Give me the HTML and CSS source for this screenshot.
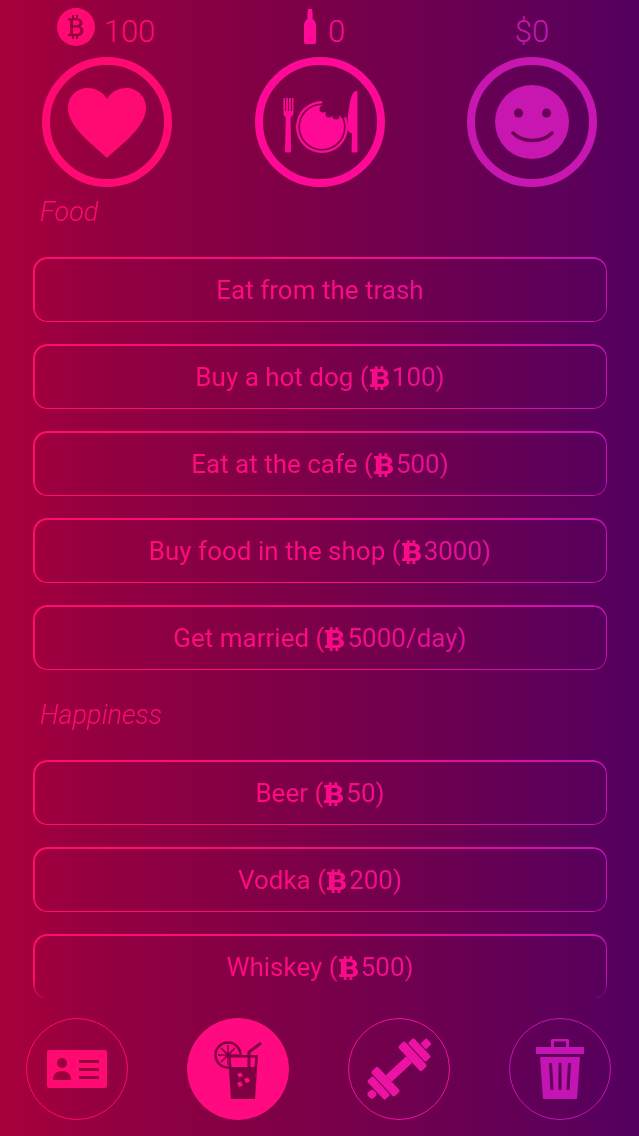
FILE: index.html
```html
<html lang="en">

<head>
    <meta charset="UTF-8">
    <meta name="viewport" content="width=device-width, initial-scale=1.0">
    <title>Life Simulator</title>
    <link rel="stylesheet" href="styles.css">
</head>

<body>
    <svg class="sprites">
        <symbol id="btc" viewBox="0 0 20 25">
            <path fill-rule="evenodd" d="M5 0h3v3h3V0h3v3.200c3.300.6 5 2.500 5 5 0 1.800-1 3.200-2.500 3.900 2 .7 3.500 2.300 3.500 4.700 0 3.100-2.300 5-6 5.200V25h-3v-3h-3v3H5v-3H0v-3h2V6H0V3h5zm3 6.200v4.600h3.500c1.800 0 3-.9 3-2.300S13.300 6.200 11.500 6.200zm0 7.700v5h4c2 0 3.300-1 3-2.500-.1-1.600-1.300-2.500-3-2.500z" />
        </symbol>
    </svg>

    <div class="game">
        <div class="stats">
            <div class="stat stat--red">
                <div class="stat__label">
                    <svg class="stat__coin" viewBox="0 0 38 38">
                        <mask id="coin-b">
                            <rect width="38" height="38" fill="#fff" />
                            <path fill="#000" fill-rule="evenodd" d="M15 7h2v3h2V7h2v3.200c3 .6 4.500 2.300 4.500 4.800 0 1.700-.8 3-2.200 3.600 2 .6 3.200 2.200 3.200 4.400 0 3-2 4.800-5.500 5.200V31h-2v-2.700h-2V31h-2v-2.700h-4v-2.300h2V12.500h-2v-2.300h4zm1 5.300v5h3.500c1.800 0 3-.9 3-2.500s-1.200-2.500-3-2.500zm0 7.200v6.200h4c2 0 3.300-1.200 3.300-3.100s-1.300-3.100-3.300-3.100z" />
                        </mask>
                        <circle cx="19" cy="19" r="19" fill="currentColor" mask="url(#coin-b)" />
                    </svg>
                    <span class="stat__value">100</span>
                </div>
                <div class="stat__ring">
                    <svg class="icon-heart" viewBox="0 0 78 70">
                        <path fill="currentColor" d="M39 70C27 58 0 40 0 20 0 8 9 0 20 0c8 0 15 4 19 11C43 4 50 0 58 0c11 0 20 8 20 20 0 20-27 38-39 50z" />
                    </svg>
                </div>
            </div>

            <div class="stat stat--pink">
                <div class="stat__label">
                    <svg class="stat__bottle" viewBox="0 0 12 35">
                        <path fill="currentColor" d="M4 0h4v2l.6.500V9c0 2 3.400 3 3.400 7v17c0 1.200-.8 2-2 2H2c-1.200 0-2-.8-2-2V16c0-4 3.400-5 3.400-7V2.500L4 2z" />
                    </svg>
                    <span class="stat__value">0</span>
                </div>
                <div class="stat__ring">
                    <svg class="icon-plate" viewBox="0 0 80 66">
                        <mask id="plate-bite">
                            <rect width="80" height="66" fill="#fff" />
                            <circle cx="42" cy="38" r="22.800" fill="none" stroke="#000" stroke-width="1.600" />
                            <circle cx="55" cy="14" r="13" fill="#000" />
                            <circle cx="43" cy="20" r="3.500" fill="#000" />
                            <circle cx="49" cy="25" r="3.500" fill="#000" />
                            <circle cx="56" cy="27" r="3.500" fill="#000" />
                            <circle cx="63" cy="26" r="3" fill="#000" />
                        </mask>
                        <path fill="currentColor" d="M3.500 9h1.500v13h1.100V9h1.800v13h1.100V9h1.800v13h1.100V9h1.500v15c0 2-1 3.500-2.800 4.200L11 62c0 1-.7 1.500-3 1.500S5 63 5 62l.8-33.800c-1.800-.7-2.300-2.200-2.300-4.200z" />
                        <circle cx="42" cy="38" r="26" fill="currentColor" mask="url(#plate-bite)" />
                        <path fill="currentColor" d="M76 2c1 0 1.500.5 1.500 1.500V62c0 1-.7 1.500-3 1.500S71.500 63 71.500 62l.5-18c-3 0-4-2-4-5-.5-6-.500-12 1-20 1-6 3-17 7-17z" />
                    </svg>
                </div>
            </div>

            <div class="stat stat--violet">
                <div class="stat__label">
                    <span class="stat__value">$0</span>
                </div>
                <div class="stat__ring">
                    <svg class="icon-smile" viewBox="0 0 74 74">
                        <circle cx="37" cy="37" r="37" fill="currentColor" />
                        <circle cx="23.500" cy="28" r="4.500" class="icon-smile__cut" />
                        <circle cx="51.500" cy="28" r="4.500" class="icon-smile__cut" />
                        <path d="M18 48c10 10 29 10 39 0" fill="none" stroke-width="3.500" stroke-linecap="round" class="icon-smile__line" />
                    </svg>
                </div>
            </div>
        </div>

        <div class="shop">
            <h2 class="shop__title">Food</h2>
            <button class="shop__item"><span class="shop__text">Eat from the trash</span></button>
            <button class="shop__item"><span class="shop__text">Buy a hot dog (</span><svg class="shop__btc"><use href="#btc" /></svg><span class="shop__text">100)</span></button>
            <button class="shop__item"><span class="shop__text">Eat at the cafe (</span><svg class="shop__btc"><use href="#btc" /></svg><span class="shop__text">500)</span></button>
            <button class="shop__item"><span class="shop__text">Buy food in the shop (</span><svg class="shop__btc"><use href="#btc" /></svg><span class="shop__text">3000)</span></button>
            <button class="shop__item"><span class="shop__text">Get married (</span><svg class="shop__btc"><use href="#btc" /></svg><span class="shop__text">5000/day)</span></button>

            <h2 class="shop__title shop__title--next">Happiness</h2>
            <button class="shop__item"><span class="shop__text">Beer (</span><svg class="shop__btc"><use href="#btc" /></svg><span class="shop__text">50)</span></button>
            <button class="shop__item"><span class="shop__text">Vodka (</span><svg class="shop__btc"><use href="#btc" /></svg><span class="shop__text">200)</span></button>
            <button class="shop__item"><span class="shop__text">Whiskey (</span><svg class="shop__btc"><use href="#btc" /></svg><span class="shop__text">500)</span></button>
        </div>

        <div class="nav">
            <div class="nav__btn nav__btn--id">
                <svg class="nav__icon" width="62" height="40" viewBox="0 0 62 40">
                    <mask id="id-cut">
                        <rect width="62" height="40" fill="#fff" />
                        <circle cx="16" cy="14" r="5" fill="#000" />
                        <path fill="#000" d="M7 31c0-6 4-9 9-9s9 3 9 9z" />
                        <rect x="33" y="11" width="20" height="3" fill="#000" />
                        <rect x="33" y="19" width="20" height="3" fill="#000" />
                        <rect x="33" y="27" width="20" height="3" fill="#000" />
                    </mask>
                    <rect x="1" y="1" width="60" height="38" rx="2" fill="currentColor" mask="url(#id-cut)" />
                </svg>
            </div>

            <div class="nav__btn nav__btn--active">
                <svg class="nav__icon" width="56" height="62" viewBox="0 0 56 62">
                    <g fill="none" stroke="currentColor">
                        <circle cx="18" cy="17" r="12.500" stroke-width="2.500" />
                        <path stroke-width="1.500" d="M18 7v20M8 17h20M11 10l14 14M25 10L11 24" />
                        <path stroke-width="3" d="M38.500 24l.5-10 12-9" />
                    </g>
                    <path class="nav__glass" d="M18 17h30l-3 44H21z" />
                    <path fill="currentColor" fill-rule="evenodd" d="M18 17h30l-3 44H21zm2.700 2.500l.8 9.500h23l.8-9.500z" />
                    <path fill="currentColor" d="M37.500 18h3v11h-3z" />
                    <path class="nav__glass" d="M27 36l4-1.500 2 3.500-4 1.500zM34 41l4-1.500 2 4-4 1.500zM27 45l4-1.500 2 4-4 1.500z" />
                </svg>
            </div>

            <div class="nav__btn nav__btn--gym">
                <svg class="nav__icon" width="84" height="62" viewBox="-42 -31 84 62">
                    <g fill="currentColor" transform="rotate(-43)">
                        <rect x="-14" y="-4.500" width="28" height="9" />
                        <rect x="-23" y="-17" width="9" height="34" rx="2" />
                        <rect x="-32" y="-13" width="8" height="26" rx="2" />
                        <rect x="-41" y="-4" width="8" height="8" rx="3" />
                        <rect x="14" y="-17" width="9" height="34" rx="2" />
                        <rect x="24" y="-13" width="8" height="26" rx="2" />
                        <rect x="33" y="-4" width="8" height="8" rx="1" />
                    </g>
                </svg>
            </div>

            <div class="nav__btn nav__btn--trash">
                <svg class="nav__icon" width="48" height="60" viewBox="0 0 48 60">
                    <path fill="currentColor" fill-rule="evenodd" d="M16 0h16l1 1v7H15V1zm2 2.500V8h12V2.500zM0 8h48v7H0zM4 18h40l-3 42H7zm9 6l1.500 27h3L16 24zm9.500 0v27h3V24zM32 24l-1.500 27h3L35 24z" />
                </svg>
            </div>
        </div>
    </div>
</body>

</html>
```

FILE: styles.css
```css
:root {
    --red: #ff0a72;
    --pink: #ff0a96;
    --violet: #c816b0;
    --line: linear-gradient(90deg, #ff0c70 0%, #ff0a84 50%, #c414b4 100%);
}

body {
    margin: 0;
    background: linear-gradient(90deg, #a8003a 0%, #950040 15%, #7a0048 50%, #54005f 100%);
    font-family: Roboto, sans-serif;
    font-weight: 400;
}

.sprites {
    display: none;
}

.game {
    display: flex;
    flex-direction: column;
    height: 100vh;
    overflow: hidden;
}

.stats {
    display: flex;
    justify-content: space-between;
    padding: 0 42px;
}

.stat {
    width: 130px;
}

.stat--red {
    color: var(--red);
}

.stat--pink {
    color: var(--pink);
}

.stat--violet {
    color: var(--violet);
}

.stat__label {
    display: flex;
    justify-content: center;
    align-items: flex-end;
    gap: 9px;
    height: 49px;
    margin-bottom: 8px;
}

.stat--red .stat__label {
    padding-right: 2px;
}

.stat--pink .stat__label {
    gap: 12px;
    padding-left: 10px;
}

.stat__value {
    font-size: 31px;
    font-weight: 300;
    line-height: 34px;
}

.stat__coin {
    width: 38px;
    height: 38px;
    align-self: flex-start;
    margin-top: 8px;
}

.stat__bottle {
    width: 12px;
    height: 35px;
    margin-bottom: 5px;
}

.stat__ring {
    display: flex;
    justify-content: center;
    align-items: center;
    box-sizing: border-box;
    width: 130px;
    height: 130px;
    border: 8.500px solid currentColor;
    border-radius: 50%;
}

.icon-heart {
    width: 78px;
    height: 70px;
    margin-top: 1px;
}

.icon-plate {
    width: 80px;
    height: 66px;
}

.icon-smile {
    width: 74px;
    height: 74px;
}

.icon-smile__cut {
    fill: #670056;
}

.icon-smile__line {
    stroke: #670056;
}

.shop {
    flex: 1;
    display: flex;
    flex-direction: column;
    gap: 22px;
    min-height: 0;
    padding: 0 32px 0 33px;
    overflow: hidden;
    -webkit-mask-image: linear-gradient(180deg, #000 0, #000 790px, rgba(0, 0, 0, .35) 811px);
    mask-image: linear-gradient(180deg, #000 0, #000 790px, rgba(0, 0, 0, .35) 811px);
}

.shop__title {
    flex-shrink: 0;
    height: 48px;
    margin: 0;
    padding-left: 7px;
    font-size: 27px;
    font-weight: 300;
    font-style: italic;
    line-height: 50px;
    color: var(--red);
}

.shop__title--next {
    height: 46px;
    line-height: 46px;
}

.shop__item {
    position: relative;
    display: flex;
    justify-content: center;
    align-items: center;
    flex-shrink: 0;
    height: 65px;
    padding: 2px 0 0;
    border: 0;
    border-radius: 14px;
    background: none;
    font: inherit;
}

/* gradient hairline round the button */
.shop__item::before {
    content: "";
    position: absolute;
    inset: 0;
    padding: 1.500px;
    border-radius: inherit;
    background: var(--line);
    -webkit-mask: linear-gradient(#000 0 0) content-box, linear-gradient(#000 0 0);
    -webkit-mask-composite: xor;
    mask-composite: exclude;
}

/* text takes its colour from where it sits on the page */
.shop__text {
    font-size: 26px;
    line-height: 63px;
    background: var(--line) fixed;
    -webkit-background-clip: text;
    background-clip: text;
    color: transparent;
}

.shop__btc {
    width: 19px;
    height: 24px;
    margin: 0 3px 0 1px;
    fill: #f80a88;
}

.nav {
    display: flex;
    justify-content: space-between;
    padding: 20px 28px 16px 26px;
}

.nav__btn {
    display: flex;
    justify-content: center;
    align-items: center;
    box-sizing: border-box;
    width: 102px;
    height: 102px;
    border: 1.800px solid currentColor;
    border-radius: 50%;
}

.nav__btn--id {
    color: #ff0a70;
}

.nav__btn--active {
    color: #7e0042;
    background: #ff0a80;
    border-color: #ff0a80;
}

.nav__glass {
    fill: #ff0a80;
}

.nav__btn--gym {
    color: #ec12a4;
}

.nav__btn--trash {
    color: #c414b4;
}
```
